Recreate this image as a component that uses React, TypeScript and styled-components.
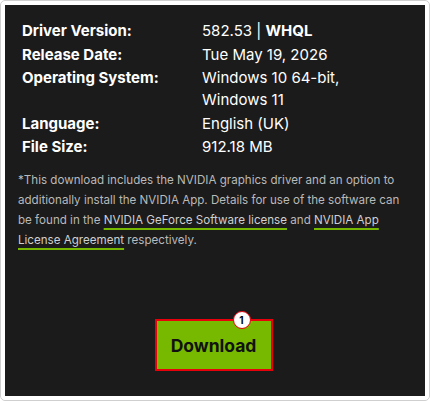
import { Fragment } from "react";
import styled, { createGlobalStyle } from "styled-components";

const GlobalStyle = createGlobalStyle`
  html, body {
    margin: 0;
    padding: 0;
    background: #fff;
  }
  body {
    font-family: Inter, "Noto Sans", sans-serif;
  }
`;

const Frame = styled.div`
  width: 430px;
  height: 401px;
  box-sizing: border-box;
  border: 1px solid #cfcfcf;
  border-radius: 5px;
  padding: 4px;
  background: #fff;
`;

const Panel = styled.div`
  height: 100%;
  background: #1b1b1b;
  padding: 15px 12px 0 13px;
  box-sizing: border-box;
  display: flex;
  flex-direction: column;
`;

const Specs = styled.dl`
  display: grid;
  grid-template-columns: 180px 1fr;
  margin: 0 0 0 4px;
  row-gap: 1.3px;
  color: #fff;
  font-size: 15px;
  line-height: 22.2px;
`;

const Label = styled.dt`
  font-weight: 700;
`;

const Value = styled.dd`
  margin: 0;
  font-weight: 400;
  b {
    font-weight: 700;
  }
`;

const Note = styled.p`
  margin: 12px 0 0;
  color: #b9b9b9;
  font-size: 11.6px;
  line-height: 20px;
`;

const Link = styled.span`
  color: #cfcfcf;
  text-decoration: underline;
  text-decoration-color: #76b900;
  text-decoration-thickness: 2px;
  text-underline-offset: 4px;
`;

const ButtonRow = styled.div`
  display: flex;
  justify-content: center;
  margin-top: 69px;
  padding-right: 4px;
`;

const DownloadButton = styled.button`
  position: relative;
  width: 118px;
  height: 52px;
  background: #76b900;
  border: 2px solid #e8000b;
  color: #111;
  font-family: Inter, "Noto Sans", sans-serif;
  font-size: 17.5px;
  font-weight: 700;
  cursor: pointer;
`;

const Badge = styled.span`
  position: absolute;
  top: -10px;
  left: 76px;
  width: 18px;
  height: 18px;
  border-radius: 50%;
  background: #fff;
  border: 1.5px solid #e8000b;
  box-sizing: border-box;
  color: #000;
  font-size: 10px;
  font-weight: 700;
  display: flex;
  align-items: center;
  justify-content: center;
`;

const specs: [string, React.ReactNode][] = [
  ["Driver Version:", <>582.53 | <b>WHQL</b></>],
  ["Release Date:", "Tue May 19, 2026"],
  ["Operating System:", <>Windows 10 64-bit,<br />Windows 11</>],
  ["Language:", "English (UK)"],
  ["File Size:", "912.18 MB"],
];

export default function App() {
  return (
    <>
      <GlobalStyle />
      <Frame>
        <Panel>
          <Specs>
            {specs.map(([label, value]) => (
              <Fragment key={label}>
                <Label>{label}</Label>
                <Value>{value}</Value>
              </Fragment>
            ))}
          </Specs>
          <Note>
            *This download includes the NVIDIA graphics driver and an option to
            additionally install the NVIDIA App. Details for use of the software can
            be found in the <Link>NVIDIA GeForce Software license</Link> and{" "}
            <Link>NVIDIA App License Agreement</Link> respectively.
          </Note>
          <ButtonRow>
            <DownloadButton>
              <Badge>1</Badge>
              Download
            </DownloadButton>
          </ButtonRow>
        </Panel>
      </Frame>
    </>
  );
}
